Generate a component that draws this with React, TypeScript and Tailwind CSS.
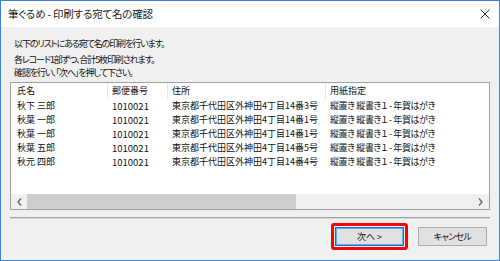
import React from 'react'

const rows = [
  { name: '秋下 三郎', zip: '1010021', addr: '東京都千代田区外神田4丁目14番3号' },
  { name: '秋葉 一郎', zip: '1010021', addr: '東京都千代田区外神田4丁目14番1号' },
  { name: '秋葉 一郎', zip: '1010021', addr: '東京都千代田区外神田4丁目14番1号' },
  { name: '秋葉 五郎', zip: '1010021', addr: '東京都千代田区外神田4丁目14番5号' },
  { name: '秋元 四郎', zip: '1010021', addr: '東京都千代田区外神田4丁目14番4号' },
]

const paper = '縦置き 縦書き１ - 年賀はがき'

export default function App() {
  return (
    <div className={`w-[500px] h-[261px] border border-[#3c83cf] bg-[#f0f0f0] flex flex-col font-['Noto_Sans_CJK_JP',sans-serif] [font-feature-settings:"palt"] text-[#111] overflow-hidden`}>
      {/* title bar */}
      <div className="h-[26px] bg-white flex items-center justify-between pl-[7px] pr-[9px] shrink-0">
        <span className="text-[10.5px] leading-none text-[#222] tracking-[-0.2px]">筆ぐるめ - 印刷する宛て名の確認</span>
        <svg width="10" height="10" viewBox="0 0 10 10" className="text-[#333]">
          <path d="M0.5 0.5 L9.5 9.5 M9.5 0.5 L0.5 9.5" stroke="currentColor" strokeWidth="1" fill="none" />
        </svg>
      </div>

      <div className="flex-1 flex flex-col px-[9px] pb-[10px] text-[9px]">
        <div className="pl-[4px] pt-[10px] leading-[13px] tracking-[-1.1px]">
          <p>以下のリストにある宛て名の印刷を行います。</p>
          <p className="mt-[3px]">各レコード1部ずつ、合計5枚印刷されます。</p>
          <p>確認を行い、「次へ」を押して下さい。</p>
        </div>

        {/* list view */}
        <div className="mt-[3px] h-[128px] border border-[#a0a0a0] bg-white flex flex-col overflow-hidden">
          <div className="flex h-[16px] items-center shrink-0 whitespace-nowrap">
            <div className="w-[97px] h-full pl-[6px] flex items-center border-r border-[#e5e5e5]">氏名</div>
            <div className="w-[60px] h-full pl-[4px] flex items-center border-r border-[#e5e5e5]">郵便番号</div>
            <div className="w-[158px] h-full pl-[4px] flex items-center border-r border-[#e5e5e5]">住所</div>
            <div className="flex-1 h-full pl-[4px] flex items-center">用紙指定</div>
          </div>
          <div className="flex-1 whitespace-nowrap">
            {rows.map((r, i) => (
              <div key={i} className="flex h-[14px] items-center">
                <div className="w-[97px] pl-[6px]">{r.name}</div>
                <div className="w-[60px] pl-[4px] text-[9.5px]">{r.zip}</div>
                <div className="w-[158px] pl-[4px]">{r.addr}</div>
                <div className="flex-1 pl-[4px] tracking-[-0.4px]">{paper}</div>
              </div>
            ))}
          </div>
          {/* horizontal scrollbar */}
          <div className="h-[15px] flex bg-[#f0f0f0] shrink-0">
            <div className="w-[16px] flex items-center justify-center">
              <svg width="5" height="8" viewBox="0 0 5 8">
                <path d="M4 0.5 L1 4 L4 7.5" stroke="#606060" strokeWidth="1.3" fill="none" />
              </svg>
            </div>
            <div className="w-[269px] bg-[#cdcdcd]" />
            <div className="flex-1" />
            <div className="w-[17px] flex items-center justify-center">
              <svg width="5" height="8" viewBox="0 0 5 8">
                <path d="M1 0.5 L4 4 L1 7.5" stroke="#606060" strokeWidth="1.3" fill="none" />
              </svg>
            </div>
          </div>
        </div>

        {/* separator */}
        <div className="mt-[7px] h-[2px] border-t border-[#a0a0a0] border-b border-b-[#d8d8d8]" />

        {/* buttons */}
        <div className="mt-auto flex justify-end items-center gap-[10px] pr-[3px]">
          <div className="border-[3px] border-[#ff0000] rounded-[3px] p-[1px]">
            <div className="w-[69px] h-[19px] bg-[#e1e1e1] border border-[#0078d7] shadow-[inset_0_0_0_1px_#6aa8e6] flex items-center justify-center">
              次へ &gt;
            </div>
          </div>
          <div className="w-[69px] h-[19px] bg-[#e1e1e1] border border-[#adadad] flex items-center justify-center tracking-[-0.6px]">
            キャンセル
          </div>
        </div>
      </div>
    </div>
  )
}
